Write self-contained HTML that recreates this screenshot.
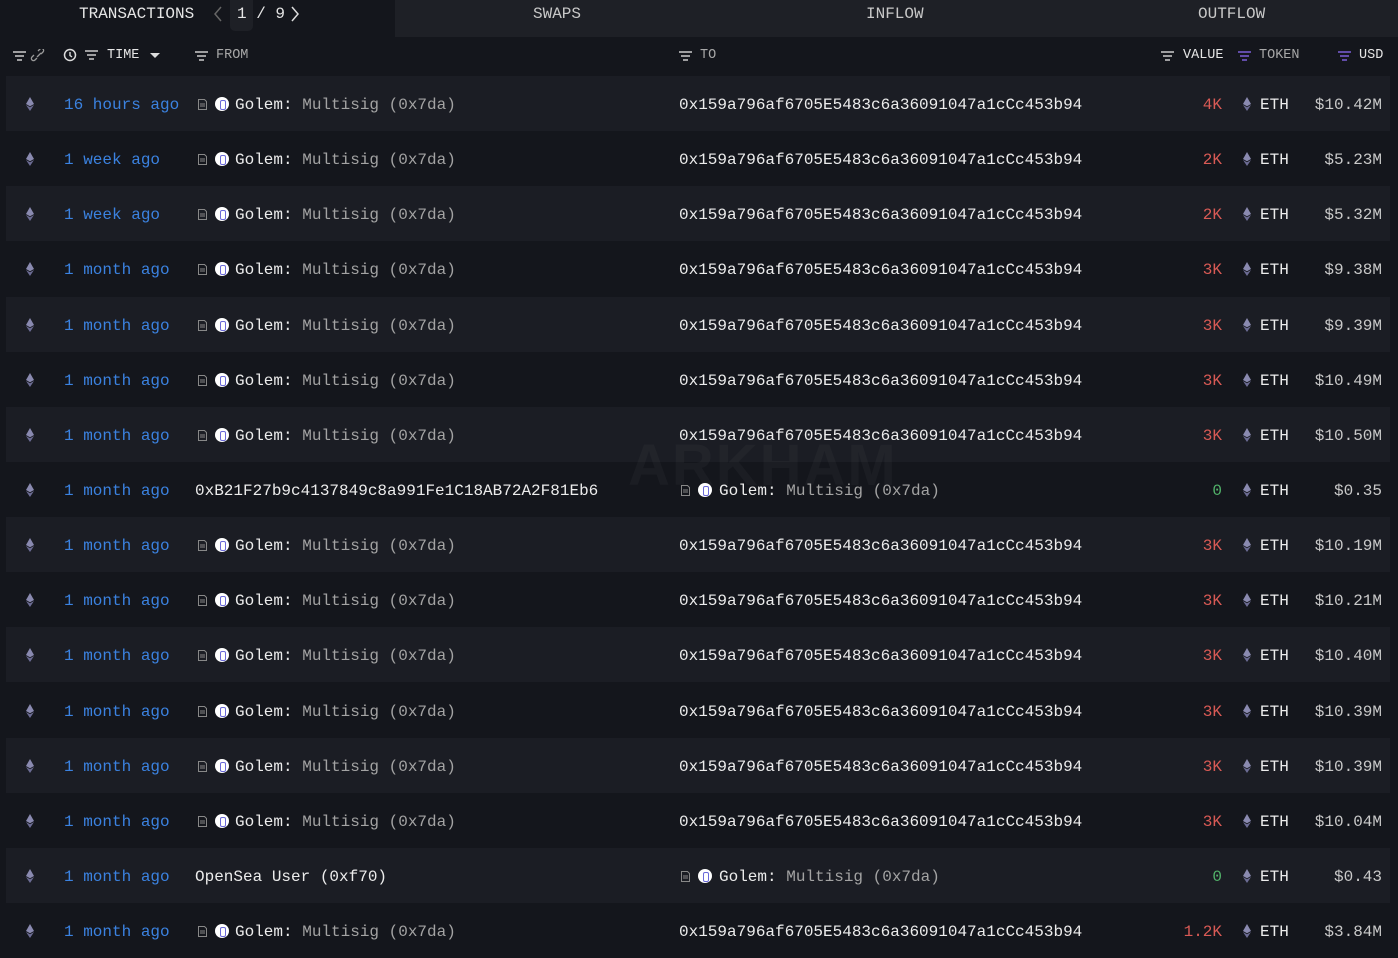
<!DOCTYPE html>
<html><head><meta charset="utf-8"><style>
*{margin:0;padding:0;box-sizing:border-box}
body{width:1398px;height:956px;background:#14161c;font-family:"Liberation Mono",monospace;color:#e6e6e6;overflow:hidden;position:relative}
.tabs{position:absolute;top:0;left:0;width:1398px;height:37px;background:#1e2026}
.tab0{position:absolute;left:0;top:0;width:395px;height:37px;background:#14161c}
.t{position:absolute;top:5px;font-size:16px;color:#e6e6e6}
.tg{color:#c8c8c8}
.hd{position:absolute;top:48px;font-size:13.5px;color:#e6e6e6}
.hdg{color:#a8a8a8}
.row{position:absolute;left:6px;width:1384px;height:55px}
.alt{background:#1b1d24}
.c{position:absolute;top:19px;font-size:16px;line-height:20px;white-space:pre}
.tm{left:58px;color:#3b82e0}
.w{color:#ececec}.g{color:#a3a3a3}
.v{right:168px;color:#d95a55;text-align:right}
.v0{color:#52b36a}
.usd{right:8px;color:#c9c9c9;text-align:right}
.eth{position:absolute;top:21px;width:8px;height:14px}
.doc{position:absolute;top:23px;width:9px;height:11px}
.cir{position:absolute;top:21px;width:14px;height:14px;border-radius:50%;background:#fff}
.cir:after{content:"";position:absolute;left:5px;top:3px;width:4px;height:8px;border:1px solid #6a6ad8;border-radius:2px}
</style></head><body>
<div class="tabs"><div class="tab0"></div>
<div class="t" style="left:79px">TRANSACTIONS</div>
<svg style="position:absolute;left:213px;top:6px" width="10" height="16"><path d="M8 1L2 8l6 7" stroke="#666" stroke-width="1.5" fill="none"/></svg>
<div style="position:absolute;left:230px;top:0;width:23px;height:31px;background:#1e2026;border-radius:0 0 5px 5px"></div>
<div class="t" style="left:237px">1 / 9</div>
<svg style="position:absolute;left:290px;top:6px" width="10" height="16"><path d="M2 1l6 7-6 7" stroke="#ddd" stroke-width="1.5" fill="none"/></svg>
<div class="t tg" style="left:533px">SWAPS</div>
<div class="t tg" style="left:866px">INFLOW</div>
<div class="t tg" style="left:1198px">OUTFLOW</div>
</div>
<svg style="position:absolute;left:12px;top:49px" width="36" height="14"><g stroke="#ccc" stroke-width="1.5"><path d="M1 3h13M3 7h9M5 11h5"/></g><g stroke="#999" fill="none" stroke-width="1.3"><path d="M25 9l-2 2a2 2 0 0 1-3-3l2-2M29 5l2-2a2 2 0 0 0-3-3l-2 2M25 8l4-4"/></g></svg>
<svg style="position:absolute;left:63px;top:48px" width="40" height="16"><circle cx="7" cy="7" r="5.5" stroke="#ddd" stroke-width="1.5" fill="none"/><path d="M7 4v3.5l2 1.5" stroke="#ddd" stroke-width="1.4" fill="none"/><g stroke="#ccc" stroke-width="1.5"><path d="M22 3h13M24 7h9M26 11h5"/></g></svg>
<div class="hd" style="left:107px">TIME</div>
<svg style="position:absolute;left:150px;top:53px" width="10" height="6"><path d="M0 0h10L5 5z" fill="#ddd"/></svg>
<svg style="position:absolute;left:194px;top:49px" width="15" height="14"><g stroke="#ccc" stroke-width="1.5"><path d="M1 3h13M3 7h9M5 11h5"/></g></svg>
<div class="hd hdg" style="left:216px">FROM</div>
<svg style="position:absolute;left:678px;top:49px" width="15" height="14"><g stroke="#ccc" stroke-width="1.5"><path d="M1 3h13M3 7h9M5 11h5"/></g></svg>
<div class="hd hdg" style="left:700px">TO</div>
<svg style="position:absolute;left:1160px;top:49px" width="15" height="14"><g stroke="#ccc" stroke-width="1.5"><path d="M1 3h13M3 7h9M5 11h5"/></g></svg>
<div class="hd" style="left:1183px">VALUE</div>
<svg style="position:absolute;left:1237px;top:49px" width="15" height="14"><g stroke="#7b5fd6" stroke-width="1.5"><path d="M1 3h13M3 7h9M5 11h5"/></g></svg>
<div class="hd hdg" style="left:1259px">TOKEN</div>
<svg style="position:absolute;left:1337px;top:49px" width="15" height="14"><g stroke="#7b5fd6" stroke-width="1.5"><path d="M1 3h13M3 7h9M5 11h5"/></g></svg>
<div class="hd" style="left:1359px">USD</div>

<svg width="0" height="0" style="position:absolute"><defs>
<g id="e"><path d="M4 0L0 7l4 2.3L8 7z" fill="#8a8ab0"/><path d="M4 10.3L0 8l4 6 4-6z" fill="#6c6c94"/></g>
<g id="d"><path d="M0.5 0.5h6l2 2v8h-8z" fill="none" stroke="#888" stroke-width="1"/><path d="M2 5h5M2 7h5" stroke="#888"/></g>
</defs></svg>

<div class="row alt" style="top:76px"><svg class="eth" style="left:20px"><use href="#e"/></svg><div class="c tm">16 hours ago</div><svg class="doc" style="left:192px"><use href="#d"/></svg><div class="cir" style="left:209px"></div><div class="c" style="left:229px"><span class="w">Golem:</span><span class="g"> Multisig (0x7da)</span></div><div class="c w" style="left:673px">0x159a796af6705E5483c6a36091047a1cCc453b94</div><div class="c v">4K</div><svg class="eth" style="left:1237px"><use href="#e"/></svg><div class="c w" style="left:1254px">ETH</div><div class="c usd">$10.42M</div></div>
<div class="row" style="top:131px"><svg class="eth" style="left:20px"><use href="#e"/></svg><div class="c tm">1 week ago</div><svg class="doc" style="left:192px"><use href="#d"/></svg><div class="cir" style="left:209px"></div><div class="c" style="left:229px"><span class="w">Golem:</span><span class="g"> Multisig (0x7da)</span></div><div class="c w" style="left:673px">0x159a796af6705E5483c6a36091047a1cCc453b94</div><div class="c v">2K</div><svg class="eth" style="left:1237px"><use href="#e"/></svg><div class="c w" style="left:1254px">ETH</div><div class="c usd">$5.23M</div></div>
<div class="row alt" style="top:186px"><svg class="eth" style="left:20px"><use href="#e"/></svg><div class="c tm">1 week ago</div><svg class="doc" style="left:192px"><use href="#d"/></svg><div class="cir" style="left:209px"></div><div class="c" style="left:229px"><span class="w">Golem:</span><span class="g"> Multisig (0x7da)</span></div><div class="c w" style="left:673px">0x159a796af6705E5483c6a36091047a1cCc453b94</div><div class="c v">2K</div><svg class="eth" style="left:1237px"><use href="#e"/></svg><div class="c w" style="left:1254px">ETH</div><div class="c usd">$5.32M</div></div>
<div class="row" style="top:241px"><svg class="eth" style="left:20px"><use href="#e"/></svg><div class="c tm">1 month ago</div><svg class="doc" style="left:192px"><use href="#d"/></svg><div class="cir" style="left:209px"></div><div class="c" style="left:229px"><span class="w">Golem:</span><span class="g"> Multisig (0x7da)</span></div><div class="c w" style="left:673px">0x159a796af6705E5483c6a36091047a1cCc453b94</div><div class="c v">3K</div><svg class="eth" style="left:1237px"><use href="#e"/></svg><div class="c w" style="left:1254px">ETH</div><div class="c usd">$9.38M</div></div>
<div class="row alt" style="top:297px"><svg class="eth" style="left:20px"><use href="#e"/></svg><div class="c tm">1 month ago</div><svg class="doc" style="left:192px"><use href="#d"/></svg><div class="cir" style="left:209px"></div><div class="c" style="left:229px"><span class="w">Golem:</span><span class="g"> Multisig (0x7da)</span></div><div class="c w" style="left:673px">0x159a796af6705E5483c6a36091047a1cCc453b94</div><div class="c v">3K</div><svg class="eth" style="left:1237px"><use href="#e"/></svg><div class="c w" style="left:1254px">ETH</div><div class="c usd">$9.39M</div></div>
<div class="row" style="top:352px"><svg class="eth" style="left:20px"><use href="#e"/></svg><div class="c tm">1 month ago</div><svg class="doc" style="left:192px"><use href="#d"/></svg><div class="cir" style="left:209px"></div><div class="c" style="left:229px"><span class="w">Golem:</span><span class="g"> Multisig (0x7da)</span></div><div class="c w" style="left:673px">0x159a796af6705E5483c6a36091047a1cCc453b94</div><div class="c v">3K</div><svg class="eth" style="left:1237px"><use href="#e"/></svg><div class="c w" style="left:1254px">ETH</div><div class="c usd">$10.49M</div></div>
<div class="row alt" style="top:407px"><svg class="eth" style="left:20px"><use href="#e"/></svg><div class="c tm">1 month ago</div><svg class="doc" style="left:192px"><use href="#d"/></svg><div class="cir" style="left:209px"></div><div class="c" style="left:229px"><span class="w">Golem:</span><span class="g"> Multisig (0x7da)</span></div><div class="c w" style="left:673px">0x159a796af6705E5483c6a36091047a1cCc453b94</div><div class="c v">3K</div><svg class="eth" style="left:1237px"><use href="#e"/></svg><div class="c w" style="left:1254px">ETH</div><div class="c usd">$10.50M</div></div>
<div class="row" style="top:462px"><svg class="eth" style="left:20px"><use href="#e"/></svg><div class="c tm">1 month ago</div><div class="c w" style="left:189px">0xB21F27b9c4137849c8a991Fe1C18AB72A2F81Eb6</div><svg class="doc" style="left:675px"><use href="#d"/></svg><div class="cir" style="left:692px"></div><div class="c" style="left:713px"><span class="w">Golem:</span><span class="g"> Multisig (0x7da)</span></div><div class="c v v0">0</div><svg class="eth" style="left:1237px"><use href="#e"/></svg><div class="c w" style="left:1254px">ETH</div><div class="c usd">$0.35</div></div>
<!-- watermark -->
<div style="position:absolute;left:628px;top:432px;font-family:'Liberation Sans',sans-serif;font-weight:bold;font-size:58px;color:rgba(255,255,255,0.03);letter-spacing:2px">ARKHAM</div>
<div class="row alt" style="top:517px"><svg class="eth" style="left:20px"><use href="#e"/></svg><div class="c tm">1 month ago</div><svg class="doc" style="left:192px"><use href="#d"/></svg><div class="cir" style="left:209px"></div><div class="c" style="left:229px"><span class="w">Golem:</span><span class="g"> Multisig (0x7da)</span></div><div class="c w" style="left:673px">0x159a796af6705E5483c6a36091047a1cCc453b94</div><div class="c v">3K</div><svg class="eth" style="left:1237px"><use href="#e"/></svg><div class="c w" style="left:1254px">ETH</div><div class="c usd">$10.19M</div></div>
<div class="row" style="top:572px"><svg class="eth" style="left:20px"><use href="#e"/></svg><div class="c tm">1 month ago</div><svg class="doc" style="left:192px"><use href="#d"/></svg><div class="cir" style="left:209px"></div><div class="c" style="left:229px"><span class="w">Golem:</span><span class="g"> Multisig (0x7da)</span></div><div class="c w" style="left:673px">0x159a796af6705E5483c6a36091047a1cCc453b94</div><div class="c v">3K</div><svg class="eth" style="left:1237px"><use href="#e"/></svg><div class="c w" style="left:1254px">ETH</div><div class="c usd">$10.21M</div></div>
<div class="row alt" style="top:627px"><svg class="eth" style="left:20px"><use href="#e"/></svg><div class="c tm">1 month ago</div><svg class="doc" style="left:192px"><use href="#d"/></svg><div class="cir" style="left:209px"></div><div class="c" style="left:229px"><span class="w">Golem:</span><span class="g"> Multisig (0x7da)</span></div><div class="c w" style="left:673px">0x159a796af6705E5483c6a36091047a1cCc453b94</div><div class="c v">3K</div><svg class="eth" style="left:1237px"><use href="#e"/></svg><div class="c w" style="left:1254px">ETH</div><div class="c usd">$10.40M</div></div>
<div class="row" style="top:683px"><svg class="eth" style="left:20px"><use href="#e"/></svg><div class="c tm">1 month ago</div><svg class="doc" style="left:192px"><use href="#d"/></svg><div class="cir" style="left:209px"></div><div class="c" style="left:229px"><span class="w">Golem:</span><span class="g"> Multisig (0x7da)</span></div><div class="c w" style="left:673px">0x159a796af6705E5483c6a36091047a1cCc453b94</div><div class="c v">3K</div><svg class="eth" style="left:1237px"><use href="#e"/></svg><div class="c w" style="left:1254px">ETH</div><div class="c usd">$10.39M</div></div>
<div class="row alt" style="top:738px"><svg class="eth" style="left:20px"><use href="#e"/></svg><div class="c tm">1 month ago</div><svg class="doc" style="left:192px"><use href="#d"/></svg><div class="cir" style="left:209px"></div><div class="c" style="left:229px"><span class="w">Golem:</span><span class="g"> Multisig (0x7da)</span></div><div class="c w" style="left:673px">0x159a796af6705E5483c6a36091047a1cCc453b94</div><div class="c v">3K</div><svg class="eth" style="left:1237px"><use href="#e"/></svg><div class="c w" style="left:1254px">ETH</div><div class="c usd">$10.39M</div></div>
<div class="row" style="top:793px"><svg class="eth" style="left:20px"><use href="#e"/></svg><div class="c tm">1 month ago</div><svg class="doc" style="left:192px"><use href="#d"/></svg><div class="cir" style="left:209px"></div><div class="c" style="left:229px"><span class="w">Golem:</span><span class="g"> Multisig (0x7da)</span></div><div class="c w" style="left:673px">0x159a796af6705E5483c6a36091047a1cCc453b94</div><div class="c v">3K</div><svg class="eth" style="left:1237px"><use href="#e"/></svg><div class="c w" style="left:1254px">ETH</div><div class="c usd">$10.04M</div></div>
<div class="row alt" style="top:848px"><svg class="eth" style="left:20px"><use href="#e"/></svg><div class="c tm">1 month ago</div><div class="c w" style="left:189px">OpenSea User (0xf70)</div><svg class="doc" style="left:675px"><use href="#d"/></svg><div class="cir" style="left:692px"></div><div class="c" style="left:713px"><span class="w">Golem:</span><span class="g"> Multisig (0x7da)</span></div><div class="c v v0">0</div><svg class="eth" style="left:1237px"><use href="#e"/></svg><div class="c w" style="left:1254px">ETH</div><div class="c usd">$0.43</div></div>
<div class="row" style="top:903px"><svg class="eth" style="left:20px"><use href="#e"/></svg><div class="c tm">1 month ago</div><svg class="doc" style="left:192px"><use href="#d"/></svg><div class="cir" style="left:209px"></div><div class="c" style="left:229px"><span class="w">Golem:</span><span class="g"> Multisig (0x7da)</span></div><div class="c w" style="left:673px">0x159a796af6705E5483c6a36091047a1cCc453b94</div><div class="c v">1.2K</div><svg class="eth" style="left:1237px"><use href="#e"/></svg><div class="c w" style="left:1254px">ETH</div><div class="c usd">$3.84M</div></div>
</body></html>
